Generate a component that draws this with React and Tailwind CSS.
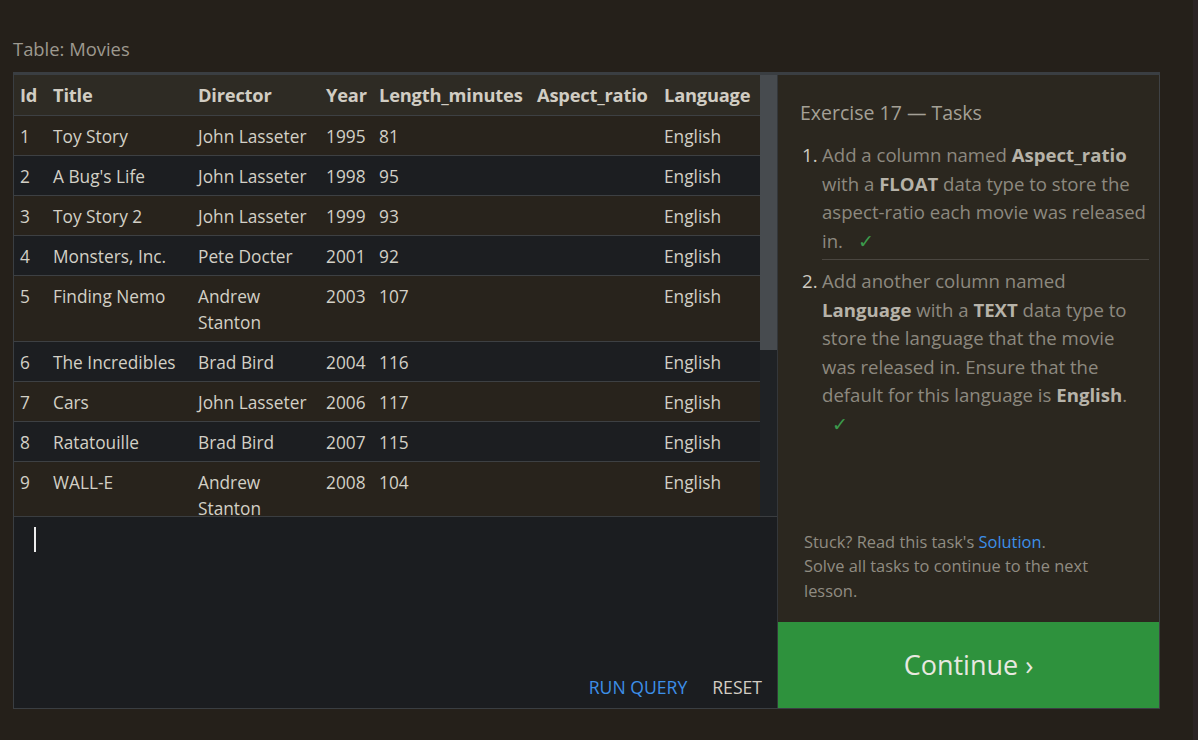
import React from "react";

const rows = [
  [1, "Toy Story", "John Lasseter", 1995, 81],
  [2, "A Bug's Life", "John Lasseter", 1998, 95],
  [3, "Toy Story 2", "John Lasseter", 1999, 93],
  [4, "Monsters, Inc.", "Pete Docter", 2001, 92],
  [5, "Finding Nemo", "Andrew Stanton", 2003, 107],
  [6, "The Incredibles", "Brad Bird", 2004, 116],
  [7, "Cars", "John Lasseter", 2006, 117],
  [8, "Ratatouille", "Brad Bird", 2007, 115],
  [9, "WALL-E", "Andrew Stanton", 2008, 104],
];

const font = { fontFamily: '"Open Sans", "Noto Sans", sans-serif' };

function B({ children }) {
  return <b className="font-bold text-[#b7b3a9]">{children}</b>;
}

const headers = ["Id", "Title", "Director", "Year", "Length_minutes", "Aspect_ratio", "Language"];

export default function App() {
  return (
    <div
      className="w-[1198px] h-[740px] bg-[#25201a] flex overflow-hidden"
      style={font}
    >
      <div className="flex-1 flex flex-col pl-[13px]">
        <div className="h-[72px] pt-[36px] text-[18.4px] leading-[26px] text-[#9d998f]">
          Table: Movies
        </div>
        <div className="w-[1147px] h-[637px] flex border-t-[3px] border-l border-b border-[#3a3e42]">
          {/* left panel */}
          <div className="w-[764px] flex flex-col border-r border-[#34373a]">
            <div className="h-[441px] flex overflow-hidden">
              <div className="w-[746px] h-full overflow-hidden bg-[#1c1e21]">
                <table className="table-fixed w-[746px] border-collapse text-[17.3px] leading-[26px] text-[#d3d0c6]">
                  <colgroup>
                    <col className="w-[31px]" />
                    <col className="w-[145px]" />
                    <col className="w-[128px]" />
                    <col className="w-[53px]" />
                    <col className="w-[158px]" />
                    <col className="w-[127px]" />
                    <col className="w-[104px]" />
                  </colgroup>
                  <thead>
                    <tr className="bg-[#2e2b24] border-b border-[#3d4043]">
                      {headers.map((h, i) => (
                        <th
                          key={h}
                          className={
                            (i === 0 ? "pl-[6px]" : "pl-[8px]") +
                            " text-left font-bold pt-[7px] pb-[7px] text-[18.3px] tracking-[-0.2px] text-[#d1cdc3] whitespace-nowrap overflow-visible"
                          }
                        >
                          {h}
                        </th>
                      ))}
                    </tr>
                  </thead>
                  <tbody>
                    {rows.map((r, i) => (
                      <tr
                        key={r[0]}
                        className={
                          (i % 2 === 0 ? "bg-[#28231c]" : "bg-[#1c1e21]") +
                          " border-b border-[#3d4043]"
                        }
                      >
                        <td className="pl-[6px] pt-[8px] pb-[5px] align-top">{r[0]}</td>
                        <td className="pl-[8px] pt-[8px] pb-[5px] align-top">{r[1]}</td>
                        <td className="pl-[8px] pt-[8px] pb-[5px] align-top">{r[2]}</td>
                        <td className="pl-[8px] pt-[8px] pb-[5px] align-top">{r[3]}</td>
                        <td className="pl-[8px] pt-[8px] pb-[5px] align-top">{r[4]}</td>
                        <td className="pl-[8px] pt-[8px] pb-[5px] align-top"></td>
                        <td className="pl-[8px] pt-[8px] pb-[5px] align-top">English</td>
                      </tr>
                    ))}
                  </tbody>
                </table>
              </div>
              <div className="w-[17px] h-full bg-[#1f2225] flex flex-col">
                <div className="h-[275px] bg-[#474b4f]" />
              </div>
            </div>
            <div className="flex-1 bg-[#1b1d20] border-t border-[#3a3d40] flex flex-col">
              <div className="pl-[20px] pt-[10px] flex-1">
                <div className="w-[2px] h-[25px] bg-[#ececec]" />
              </div>
              <div className="flex justify-end items-center gap-[25px] pr-[15px] pb-[8px] text-[17.6px] leading-[26px]">
                <span className="text-[#3d8fe8]">RUN QUERY</span>
                <span className="text-[#d3cec4]">RESET</span>
              </div>
            </div>
          </div>
          {/* right panel */}
          <div className="flex-1 flex flex-col bg-[#2b271f] border-r border-[#3f4245]">
            <div className="flex-1 flex flex-col pl-[22px] pr-[10px]">
              <div className="pt-[24px] text-[19.5px] leading-[28px] text-[#a4a096]">
                Exercise 17 — Tasks
              </div>
              <ol className="mt-[14px] text-[18.6px] leading-[28.5px] text-[#8d897f] whitespace-nowrap">
                <li className="flex">
                  <span className="w-[22px] pl-[2px] text-[#cfcbc1]">1.</span>
                  <div className="flex-1 border-b border-[#4a4640] pb-[4px]">
                    <div>
                      Add a column named <B>Aspect_ratio</B>
                    </div>
                    <div>
                      with a <B>FLOAT</B> data type to store the
                    </div>
                    <div>aspect-ratio each movie was released</div>
                    <div>
                      in. <span className="text-[#3b9a4c] ml-[10px]">✓</span>
                    </div>
                  </div>
                </li>
                <li className="flex mt-[7px]">
                  <span className="w-[22px] pl-[2px] text-[#cfcbc1]">2.</span>
                  <div className="flex-1">
                    <div>Add another column named</div>
                    <div>
                      <B>Language</B> with a <B>TEXT</B> data type to
                    </div>
                    <div>store the language that the movie</div>
                    <div>was released in. Ensure that the</div>
                    <div>
                      default for this language is <B>English</B>.
                    </div>
                    <div>
                      <span className="text-[#3b9a4c] ml-[10px]">✓</span>
                    </div>
                  </div>
                </li>
              </ol>
              <div className="mt-auto pb-[19px] pl-[4px] text-[16.4px] leading-[24.5px] text-[#908c82] whitespace-nowrap">
                <div>
                  Stuck? Read this task's <span className="text-[#3d8fe8]">Solution</span>.
                </div>
                <div>Solve all tasks to continue to the next</div>
                <div>lesson.</div>
              </div>
            </div>
            <div className="h-[86px] bg-[#2e923d] flex items-center justify-center text-[27px] text-[#e8e8e0]">
              Continue ›
            </div>
          </div>
        </div>
      </div>
      <div className="w-[5px] bg-[#2b2424]" />
    </div>
  );
}
